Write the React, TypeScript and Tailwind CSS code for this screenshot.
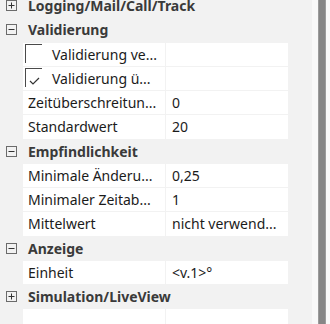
import React from "react";

type Row =
  | { kind: "header"; label: string; open: boolean }
  | { kind: "prop"; label: string; value?: string; check?: boolean }
  | { kind: "blank" };

const rows: Row[] = [
  { kind: "header", label: "Logging/Mail/Call/Track", open: false },
  { kind: "header", label: "Validierung", open: true },
  { kind: "prop", label: "Validierung ve...", check: false },
  { kind: "prop", label: "Validierung ü...", check: true },
  { kind: "prop", label: "Zeitüberschreitun...", value: "0" },
  { kind: "prop", label: "Standardwert", value: "20" },
  { kind: "header", label: "Empfindlichkeit", open: true },
  { kind: "prop", label: "Minimale Änderu...", value: "0,25" },
  { kind: "prop", label: "Minimaler Zeitab...", value: "1" },
  { kind: "prop", label: "Mittelwert", value: "nicht verwend..." },
  { kind: "header", label: "Anzeige", open: true },
  { kind: "prop", label: "Einheit", value: "<v.1>°" },
  { kind: "header", label: "Simulation/LiveView", open: false },
  { kind: "blank" },
];

const Expander = ({ open }: { open: boolean }) => (
  <svg width="11" height="11" viewBox="0 0 11 11" className="shrink-0">
    <rect x="0.5" y="0.5" width="10" height="10" fill="none" stroke="#6b6b6b" />
    <line x1="2.5" y1="5.5" x2="8.5" y2="5.5" stroke="#333" />
    {!open && <line x1="5.5" y1="2.5" x2="5.5" y2="8.5" stroke="#333" />}
  </svg>
);

const CheckBox = ({ checked }: { checked: boolean }) => (
  <div className="relative w-[17px] h-[19px] border-t border-l border-[#4a4a4a] shrink-0">
    {checked && (
      <svg width="12" height="10" viewBox="0 0 12 10" className="absolute left-[3px] top-[8px]">
        <polyline points="1,4 4,7 10,1" fill="none" stroke="#333" strokeWidth="1.2" />
      </svg>
    )}
  </div>
);

export default function App() {
  return (
    <div
      className="w-[330px] h-[324px] overflow-hidden flex bg-[#f2f2f2] text-[14px] text-[#1b1b1b]"
      style={{ fontFamily: '"Noto Sans", "Open Sans", sans-serif' }}
    >
      <div className="w-[312px] shrink-0">
        <div className="-mt-[6px] flex flex-col gap-[1px]">
          {rows.map((r, i) => {
            if (r.kind === "header") {
              return (
                <div key={i} className="h-[23.25px] flex items-center">
                  <div className="w-[28px] pl-[6px] flex items-center">
                    <Expander open={r.open} />
                  </div>
                  <span className="font-bold text-[#3a3a3a] whitespace-nowrap">{r.label}</span>
                </div>
              );
            }
            if (r.kind === "blank") {
              return (
                <div key={i} className="h-[40px] flex gap-[1px] pl-[23px]">
                  <div className="w-[142px] bg-white" />
                  <div className="w-[122px] bg-white" />
                </div>
              );
            }
            return (
              <div key={i} className="h-[23.25px] flex gap-[1px] pl-[23px]">
                <div className="w-[142px] bg-white flex items-center overflow-hidden whitespace-nowrap">
                  {r.check !== undefined ? (
                    <div className="flex items-center pl-[2px] gap-[10px] h-full pt-[1px]">
                      <div className="self-start">
                        <CheckBox checked={r.check} />
                      </div>
                      <span>{r.label}</span>
                    </div>
                  ) : (
                    <span className="pl-[5px]">{r.label}</span>
                  )}
                </div>
                <div className="w-[122px] bg-white flex items-center pl-[6px] overflow-hidden whitespace-nowrap">
                  {r.value}
                </div>
              </div>
            );
          })}
        </div>
      </div>
      <div className="w-[18px] shrink-0 bg-[#f9f9f9] pl-[6px] pr-[4px]">
        <div className="h-full bg-[#868686] border-x border-[#9c9c9c]" />
      </div>
    </div>
  );
}
